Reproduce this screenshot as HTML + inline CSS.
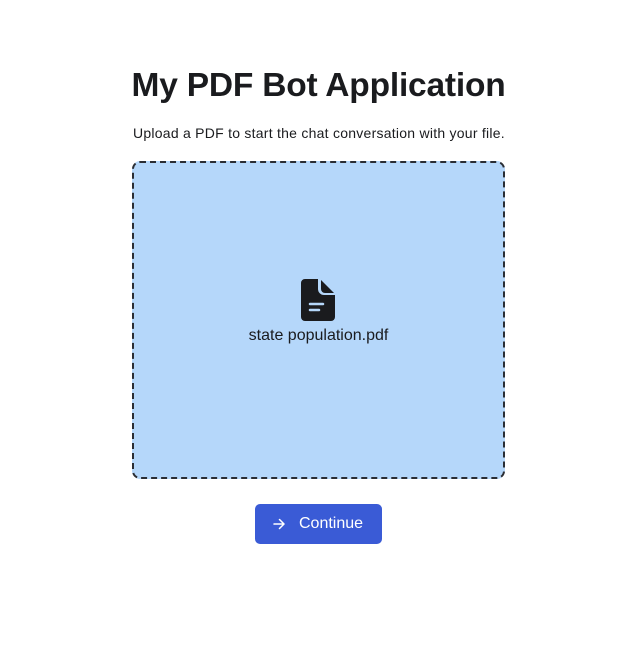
<!DOCTYPE html>
<html><head><style>
body{margin:0;width:631px;height:651px;background:#fff;font-family:"Liberation Sans",sans-serif;color:#1a1b1e;position:relative}
h1{position:absolute;top:67px;left:0;width:637px;text-align:center;margin:0;font-size:33.5px;font-weight:bold;letter-spacing:-0.2px}
.sub{position:absolute;top:125px;left:133px;font-size:14px;margin:0;letter-spacing:0.25px}
.box{position:absolute;left:132px;top:161px;width:369px;height:314px;border:2px dashed #2a2d33;border-radius:8px;background:#b5d7fa}
.fn{position:absolute;top:327px;left:132px;width:373px;text-align:center;font-size:16px}
.btn{position:absolute;left:255px;top:504px;width:127px;height:40px;border-radius:5px;background:#3a5bd6;color:#fff;font-size:16px;line-height:40px}
</style></head><body>
<h1>My PDF Bot Application</h1>
<p class="sub">Upload a PDF to start the chat conversation with your file.</p>
<div class="box"></div>
<svg style="position:absolute;left:300px;top:278px" width="36" height="44" viewBox="0 0 36 44">
<path d="M5 1h13v10a6 6 0 0 0 6 6h11v22a4 4 0 0 1-4 4H5a4 4 0 0 1-4-4V5a4 4 0 0 1 4-4z" fill="#1a1b1e"/>
<path d="M21 2l13 13H25a4 4 0 0 1-4-4z" fill="#1a1b1e"/>
<path d="M10 26h13M10 32h9" stroke="#b5d7fa" stroke-width="2.5" stroke-linecap="round"/>
</svg>
<div class="fn">state population.pdf</div>
<div class="btn"><svg style="position:absolute;left:18px;top:14px" width="12" height="12" viewBox="0 0 12 12"><path d="M1 6h10M6.5 1.5L11 6l-4.5 4.5" stroke="#fff" stroke-width="1.5" fill="none" stroke-linecap="round" stroke-linejoin="round"/></svg><span style="position:absolute;left:44px">Continue</span></div>
</body></html>
